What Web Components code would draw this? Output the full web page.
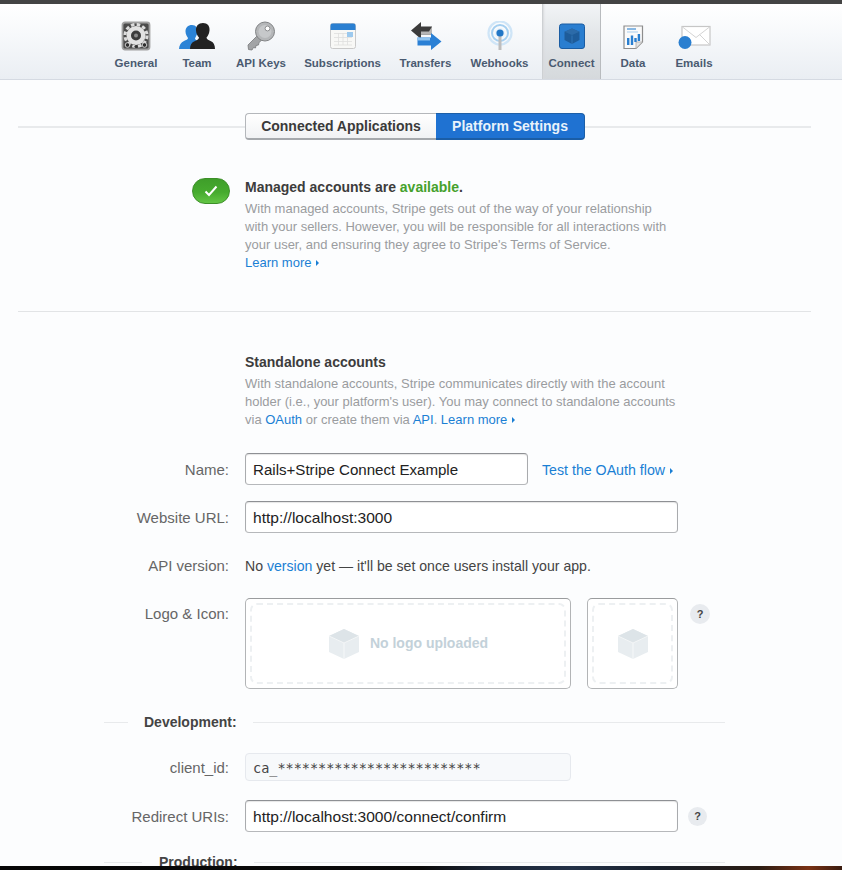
<!DOCTYPE html>
<html><head><meta charset="utf-8">
<style>html,body{margin:0;padding:0;background:#fcfdfe}a{color:#1a7fd4}</style>
</head><body>
<x-app>
  <x-nav>
    <x-nav-item label="General" w="54"><svg viewBox="0 0 30 30" width="30" height="30"><rect x="1.500" y="1.500" width="27" height="27" rx="2.500" fill="#4b4b4b" stroke="#a0a0a0" stroke-width="1.800"/><circle cx="15" cy="14.500" r="11" fill="none" stroke="#dcdcdc" stroke-width="3" stroke-dasharray="3.500 2.300"/><circle cx="15" cy="14.500" r="9.500" fill="#e2e2e2"/><circle cx="15" cy="14.500" r="5" fill="#3c3c3c"/><circle cx="15" cy="14.500" r="2" fill="#8c8c8c"/><circle cx="6.500" cy="24" r="2.300" fill="#2e2e2e" stroke="#dedede" stroke-width=".9"/><circle cx="23.500" cy="24" r="2.300" fill="#2e2e2e" stroke="#dedede" stroke-width=".9"/><circle cx="15" cy="25.500" r="1.600" fill="#333"/></svg></x-nav-item>
    <x-nav-item label="Team" w="68"><svg viewBox="0 0 36 30" width="36" height="30"><path d="M13 4c4 0 6 3 5.500 7-.3 3-2 5-2.500 6.500 0 1.500 3 2.500 5 4v6.500H0c.3-4 2-6.500 5-8 2-1 4-1.500 4-3-1-1.500-2.500-3.500-2.500-6.500C6.500 6.500 9 4 13 4z" fill="#2b83d6"/><path d="M24 2c4.500 0 7 3 6.500 7.500-.3 3-1.500 5.500-3 7 0 2 2.500 2.700 4.500 3.700 2.500 1.200 4 3.500 4 7.800H11c0-4.300 1.800-6.600 4.500-7.800 2-1 4.500-1.700 4.500-3.700-1.500-1.500-2.800-4-3-7C16.600 5 19.500 2 24 2z" fill="#222"/></svg></x-nav-item>
    <x-nav-item label="API Keys" w="60"><svg viewBox="0 0 30 30" width="30" height="30"><path d="M11.500 14.500L2 24l.5 4.500 3.500.5 1.500-2.500 2 .5.500-2.500 2.500-.5.500-2.500 5-4.500z" fill="#a2a4a6" stroke="#77787a" stroke-width=".8"/><circle cx="19" cy="10.500" r="9.500" fill="#b4b6b8" stroke="#808284" stroke-width="1"/><circle cx="19" cy="10.500" r="6.500" fill="#c6c8ca"/><circle cx="21.500" cy="7.500" r="2.400" fill="#fff" stroke="#77797b" stroke-width=".8"/></svg></x-nav-item>
    <x-nav-item label="Subscriptions" w="103"><svg viewBox="0 0 26 30" width="26" height="30"><rect x=".5" y="2.500" width="25" height="25" rx="2" fill="#f8f8f6" stroke="#c9c9c9"/><path d="M.5 9V4.500a2 2 0 012-2h21a2 2 0 012 2V9z" fill="#2a7fd1"/><path d="M4 12.500h18M4 16.500h18M4 20.500h18M4 24h18M8.500 12v12M13 12v12M17.500 12v12" stroke="#dedede" stroke-width=".8"/><rect x="17" y="11" width="6" height="5" fill="#9cc9ee"/></svg></x-nav-item>
    <x-nav-item label="Transfers" w="63"><svg viewBox="0 0 32 30" width="32" height="30"><path d="M11 1v4.500h11v8H11V18L1 9.500z" fill="#3b3b3b"/><path d="M22 5.500v8H11v-3h8z" fill="#b5b5b5"/><path d="M21 12v4.500H7.500v8H21V29l10.500-8.500z" fill="#2a80d5"/><path d="M7.500 16.500H20v3H7.500z" fill="#8fc3ef"/></svg></x-nav-item>
    <x-nav-item label="Webhooks" w="85"><svg viewBox="0 0 26 30" width="26" height="30"><circle cx="13" cy="12" r="11.500" fill="none" stroke="#cfe5f7" stroke-width="2.200"/><circle cx="13" cy="12" r="8" fill="none" stroke="#a5cff0" stroke-width="2"/><circle cx="13" cy="12" r="5" fill="#e9f3fb"/><rect x="11.500" y="13" width="3" height="16" fill="#bdbdbd"/><circle cx="13" cy="12" r="3.600" fill="#2377c6"/></svg></x-nav-item>
    <x-nav-item label="Connect" w="59" active><svg viewBox="0 0 26 30" width="26" height="30"><rect x=".5" y="3" width="25" height="24.500" rx="2.500" fill="#2a7ed0" stroke="#1b5da3"/><path d="M13 7.500l7.500 3.200v8.300L13 23l-7.500-4v-8.300z" fill="#1e5c9a"/><path d="M13 7.500l7.500 3.200-7.500 3.300-7.500-3.300z" fill="#2c6ba9"/><path d="M13 14.500V23" stroke="#2f74b6"/></svg></x-nav-item>
    <x-nav-item label="Data" w="64"><svg viewBox="0 0 22 30" width="22" height="30"><path d="M2 5h18.500v16L14 27.500H2z" fill="#fafafa" stroke="#8d8d8d" stroke-width="1.200"/><path d="M20.500 21L14 27.500V21z" fill="#e3e3e3" stroke="#aaa" stroke-width=".8"/><path d="M5 8h9" stroke="#3d8bd3" stroke-width="1.200"/><path d="M5 11h11" stroke="#a9cdec" stroke-width="1"/><path d="M5 17h2.400v7H5zM8.800 14.500h2.400V24H8.800zM12.300 17h2.400v4h-2.400zM15.700 13h2.400v7h-2.400z" fill="#2a7fd0"/></svg></x-nav-item>
    <x-nav-item label="Emails" w="58"><svg viewBox="0 0 34 30" width="34" height="30"><rect x="5" y="5.500" width="28" height="18.500" fill="#fff" stroke="#c6c6c6" stroke-width="1.200"/><path d="M5.500 6L19 16.500 32.500 6M32.500 23.500l-10-10" fill="none" stroke="#d4d4d4"/><circle cx="8" cy="21.500" r="6.500" fill="#2a7fd0"/></svg></x-nav-item>
  </x-nav>
  <x-page>
    <x-segmented></x-segmented>
    <x-feature>
      <b slot="head">Managed accounts are <span style="color:#45a12c">available</span>.</b>
      With managed accounts, Stripe gets out of the way of your relationship<br>with your sellers. However, you will be responsible for all interactions with<br>your user, and ensuring they agree to Stripe's Terms of Service.<br><x-more>Learn more</x-more>
    </x-feature>
    <x-divider></x-divider>
    <x-copy>
      <b slot="head">Standalone accounts</b>
      With standalone accounts, Stripe communicates directly with the account<br>holder (i.e., your platform's user). You may connect to standalone accounts<br>via <a>OAuth</a> or create them via <a>API</a>. <x-more>Learn more</x-more>
    </x-copy>
    <x-row label="Name:" style="margin-top:24px"><x-field w="283" style="font-size:15.100px">Rails+Stripe Connect Example</x-field><x-more style="margin-left:14px;font-size:14.200px;padding-top:1px">Test the OAuth flow</x-more></x-row>
    <x-row label="Website URL:" style="margin-top:16px"><x-field w="433">http://localhost:3000</x-field></x-row>
    <x-row label="API version:" flat style="margin-top:16px;height:34px"><span style="color:#444;font-size:14.100px">No <a>version</a> yet — it'll be set once users install your app.</span></x-row>
    <x-row label="Logo &amp; Icon:" top style="margin-top:15px"><x-drop w="326" text="No logo uploaded"></x-drop><x-drop w="91" style="margin-left:16px"></x-drop><x-help style="margin:6px 0 0 12px"></x-help></x-row>
    <x-subhead label="Development:" lead="40" line="24" style="margin-top:24px"></x-subhead>
    <x-row label="client_id:" style="margin-top:22px"><x-readonly>ca_*************************</x-readonly></x-row>
    <x-row label="Redirect URIs:" style="margin-top:19px"><x-field w="433">http://localhost:3000/connect/confirm</x-field><x-help small style="margin-left:10px"></x-help></x-row>
    <x-subhead label="Production:" lead="55" line="38" style="margin-top:21px"></x-subhead>
  </x-page>
</x-app>
<script>
const def=(n,css,html,init)=>customElements.define(n,class extends HTMLElement{connectedCallback(){if(this.shadowRoot)return;const r=this.attachShadow({mode:'open'});r.innerHTML='<style>'+css+'</style>'+(typeof html==='function'?html(this):html);if(init)init(this,r);}});
const sans='"Liberation Sans",Arial,sans-serif';
def('x-app',`:host{display:flex;flex-direction:column;width:842px;height:870px;overflow:hidden;background:#fcfdfe;font-family:${sans};position:relative}
.top{height:4px;flex:none;background:#444}
.main{flex:1;min-height:0;overflow:hidden}
.bot{height:4px;flex:none;background:linear-gradient(90deg,#060606 0,#0b0b0b 50%,#1b2536 58%,#243248 68%,#18202c 78%,#2a1c14 90%,#7a3215 96%,#3a1c10 100%)}`,
`<div class="top"></div><div class="main"><slot></slot></div><div class="bot"></div>`);
def('x-nav',`:host{display:flex;height:75px;padding-left:109px;background:linear-gradient(#fff 0,#f7f9fb 40%,#eaeef3 100%);border-bottom:1px solid #d5dae2}`,`<slot></slot>`);
def('x-nav-item',`:host{display:flex;flex-direction:column;align-items:center;flex:none;box-sizing:border-box;height:75px;padding-top:17px;font:bold 11.500px/14px ${sans};color:#4a5a70}
:host([active]){background:linear-gradient(#f2f4f6 0,#e3e6e9 40%,#d5d9dc 100%);border-left:1px solid #cdd0d3;border-right:1px solid #b8bbbe;box-shadow:inset 2px 0 2px -1px #d8dadc}
.i{height:30px;display:flex;align-items:center;justify-content:center;filter:blur(.4px)}
.l{margin-top:5px;white-space:nowrap}`,
e=>`<div class="i"><slot></slot></div><div class="l">${e.getAttribute('label')}</div>`,
e=>{e.style.width=e.getAttribute('w')+'px'});
def('x-page',`:host{display:block;width:793px;margin-left:18px;font:13px/18px ${sans}}`,`<slot></slot>`);
def('x-segmented',`:host{display:flex;align-items:center;margin-top:33px}
.ln{height:2px;margin-top:1px;background:#e8eaec}
.a{width:227px}.b{flex:1}
.s{display:flex;height:27px;box-sizing:border-box;font:bold 14px/24px ${sans};border-radius:4px}
.s div{box-sizing:border-box;text-align:center;height:27px}
.c{width:191px;color:#3a3a3a;background:linear-gradient(#fff,#f1f2f4);border:1px solid #b4b7bb;border-bottom:2px solid #a5a8ac;border-right:0;border-radius:4px 0 0 4px}
.p{width:149px;color:#e8f2fb;background:#1f72d2;border:1px solid #1c5fa8;border-bottom:2px solid #1a5da6;border-left:0;border-radius:0 4px 4px 0}`,
`<div class="ln a"></div><div class="s"><div class="c">Connected Applications</div><div class="p">Platform Settings</div></div><div class="ln b"></div>`);
def('x-more',`:host{display:inline;color:#1a7fd4}
.t{display:inline-block;width:0;height:0;border-left:3px solid #1a7fd4;border-top:3px solid transparent;border-bottom:3px solid transparent;margin-left:5px;vertical-align:1px}`,
`<slot></slot><span class="t"></span>`);
def('x-feature',`:host{display:flex;margin-top:37px;padding-left:174px;color:#9a9c9f;font:13px/18px ${sans}}
.pill{width:38px;height:26px;margin-top:1px;margin-right:15px;flex:none;box-sizing:border-box;border-radius:13px;background:linear-gradient(#3f9e2a,#46ab2e 55%,#62c544);border:1px solid #3c8f28;display:flex;align-items:center;justify-content:center}
.h{color:#3c3c3c;font-size:14px;font-weight:bold;line-height:18px;margin-bottom:4px;margin-top:1px}
.t{white-space:nowrap}`,
`<div class="pill"><svg width="14" height="12" viewBox="0 0 14 12"><path d="M1.500 6.500l3.500 3.500 7.500-8.500" fill="none" stroke="#fff" stroke-width="2"/></svg></div><div class="t"><div class="h"><slot name="head"></slot></div><slot></slot></div>`);
def('x-divider',`:host{display:block;height:1px;background:#e2e4e6;margin-top:39px}`,``);
def('x-copy',`:host{display:block;margin-top:41px;padding-left:227px;color:#9a9c9f;white-space:nowrap}
.h{color:#3c3c3c;font-size:14px;font-weight:bold;margin-bottom:4px}`,`<div class="h"><slot name="head"></slot></div><slot></slot>`);
def('x-row',`:host{display:flex;align-items:center;font:15px/18px ${sans};color:#555}
:host([top]){align-items:flex-start}
.l{width:211px;margin-right:16px;text-align:right;flex:none;color:#666;padding-top:2px}
:host([flat]) .l{padding-top:0}
:host([top]) .l{padding-top:7px}`,
e=>`<div class="l">${e.getAttribute('label').replace('&','&amp;')}</div><slot></slot>`);
def('x-field',`:host{display:block;box-sizing:border-box;height:32px;padding:0 7px;border:1px solid #a9abae;border-top-color:#8e9094;border-bottom-color:#b6b8bb;border-radius:4px;background:#fff;color:#222;font:15.550px/31px ${sans};white-space:nowrap;box-shadow:inset 0 1px 1px #e6e6e6}`,`<slot></slot>`,
e=>{e.style.width=e.getAttribute('w')+'px'});
def('x-readonly',`:host{display:block;box-sizing:border-box;width:326px;height:28px;padding:0 7px;border:1px solid #e6e9ee;border-radius:4px;background:#f7f9fb;color:#444;font:13.500px/28px "DejaVu Sans Mono",monospace;white-space:nowrap}`,`<slot></slot>`);
const cube=`<svg width="32" height="32" viewBox="0 0 32 32"><path d="M16 1L31 8v16L16 31 1 24V8z" fill="#e8edf0"/><path d="M16 1l15 7-15 7L1 8z" fill="#dde4e8"/><path d="M16 15v16" stroke="#f6f8f9"/><path d="M1 8l15 7 15-7" fill="none" stroke="#f4f6f7"/></svg>`;
def('x-drop',`:host{display:block;box-sizing:border-box;height:91px;padding:4px;border:1px solid #b2b4b6;border-top-color:#9a9c9e;border-radius:5px;background:#fff}
.d{height:100%;box-sizing:border-box;border:2px dashed #edf0f2;border-radius:7px;display:flex;align-items:center;justify-content:center;gap:10px;color:#c3d1d9;font:bold 14px/18px ${sans}}
span{position:relative;top:-1px}`,
e=>`<div class="d">${cube}${e.getAttribute('text')?`<span>${e.getAttribute('text')}</span>`:''}</div>`,
e=>{e.style.width=e.getAttribute('w')+'px'});
def('x-help',`:host{display:flex;flex:none;align-items:center;justify-content:center;width:20px;height:20px;border-radius:50%;background:#e8ebef;color:#444;font:bold 11px/20px ${sans}}
:host([small]){width:19px;height:19px}`,`?`);
def('x-subhead',`:host{display:flex;align-items:center;margin-left:86px;width:621px;height:18px;font:bold 14px/20px ${sans};color:#444}
.ln{height:1px;background:#e8eaec}.r{flex:1;margin-left:16px}.t{white-space:nowrap}`,
e=>`<div class="ln" style="width:${e.getAttribute('line')}px;margin-right:${e.getAttribute('lead')-e.getAttribute('line')}px"></div><div class="t">${e.getAttribute('label')}</div><div class="ln r"></div>`);
</script>
</body></html>
